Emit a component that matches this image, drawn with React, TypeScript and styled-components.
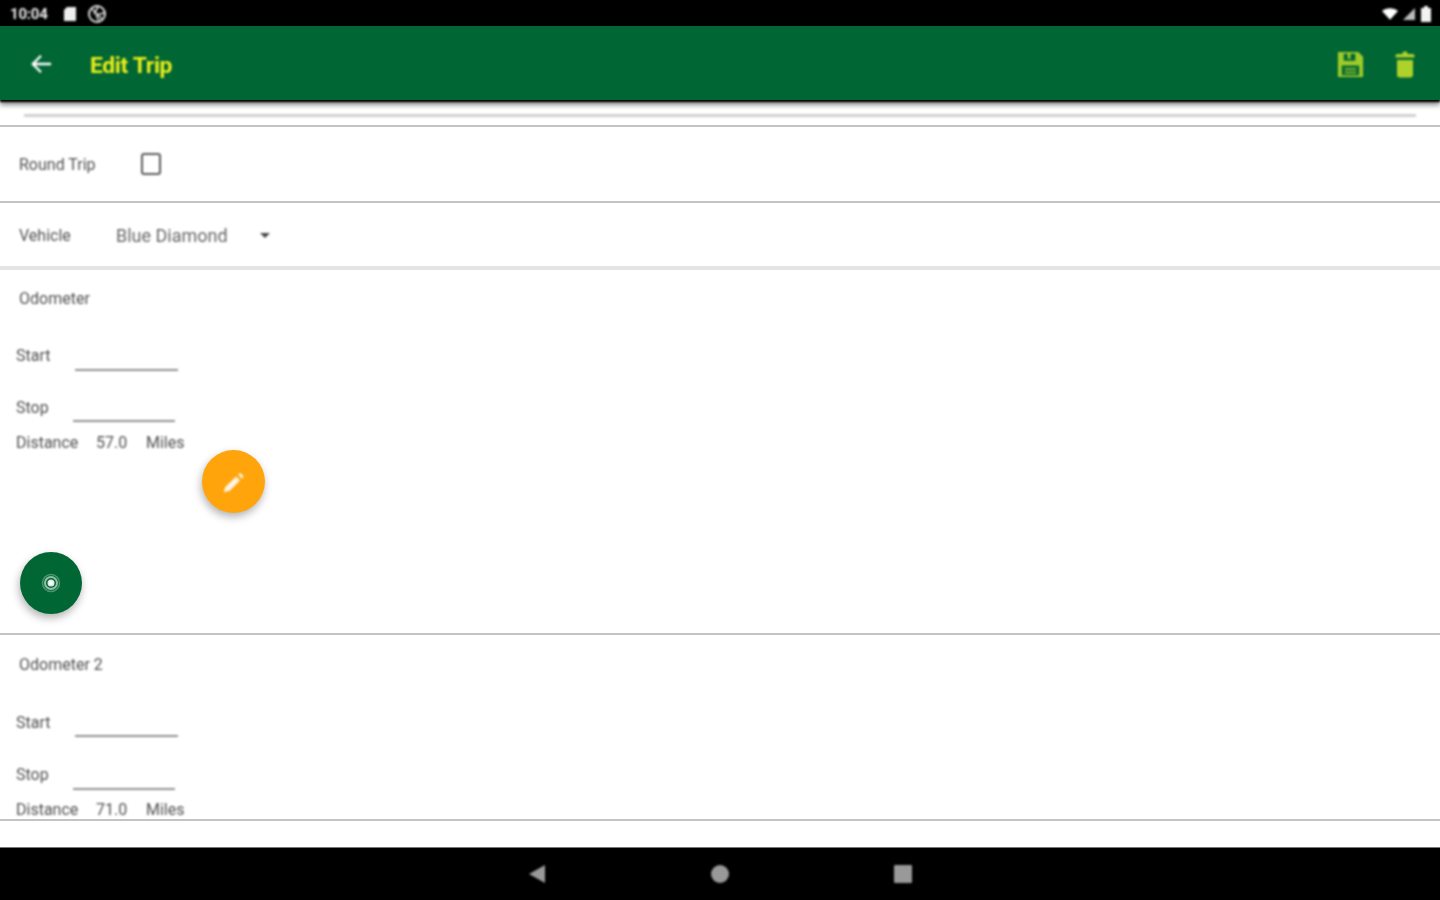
import React from "react";
import styled, { createGlobalStyle, css } from "styled-components";

const Global = createGlobalStyle`
  html, body { margin: 0; padding: 0; background: #fff; }
  #root { width: 1440px; height: 900px; overflow: hidden; }
`;

const soft = css`
  filter: blur(0.8px);
`;

const Screen = styled.div`
  position: relative;
  width: 1440px;
  height: 900px;
  display: flex;
  flex-direction: column;
  font-family: Roboto, "Liberation Sans", sans-serif;
  background: #fff;
  overflow: hidden;
`;

const StatusBar = styled.div`
  height: 26px;
  flex: none;
  background: #000;
  display: flex;
  align-items: center;
  padding: 2px 8px 0 10px;
  box-sizing: border-box;
  color: #e8e8e8;
  svg {
    ${soft}
  }
`;
const Clock = styled.span`
  ${soft}
  font-size: 15px;
  font-weight: 700;
  letter-spacing: -0.2px;
  width: 53px;
`;
const StatusLeft = styled.div`
  display: flex;
  align-items: center;
  gap: 10px;
`;
const Spacer = styled.div`
  flex: 1;
`;
const StatusRight = styled.div`
  display: flex;
  align-items: center;
  gap: 4px;
`;

const Toolbar = styled.header`
  position: relative;
  z-index: 1;
  height: 74px;
  flex: none;
  background: #006633;
  display: flex;
  align-items: center;
  padding: 2px 25px 0 30px;
  box-sizing: border-box;
  box-shadow: 0 2px 2px #000, 0 5px 5px rgba(0, 0, 0, 0.45);
  svg {
    ${soft}
  }
`;
const Title = styled.h1`
  ${soft}
  margin: 2px 0 0 38px;
  font-size: 22.8px;
  font-weight: 700;
  letter-spacing: -0.3px;
  color: #eef01a;
  flex: 1;
`;
const Actions = styled.div`
  display: flex;
  align-items: center;
  gap: 30px;
`;

const TopRule = styled.div`
  ${soft}
  height: 3px;
  margin: 14px 24px 8px;
  background: #d0d0d0;
`;

const Divider = styled.div<{ $h?: number; $c?: string }>`
  height: ${(p) => p.$h ?? 2}px;
  flex: none;
  background: ${(p) => p.$c ?? "#c4c4c4"};
`;

const Row = styled.div<{ $h: number; $pt?: number }>`
  height: ${(p) => p.$h}px;
  flex: none;
  display: flex;
  align-items: center;
  box-sizing: border-box;
  padding: ${(p) => p.$pt ?? 0}px 0 0 19px;
`;

const Label = styled.span`
  ${soft}
  font-size: 16px;
  color: #505050;
`;
const RowLabel = styled(Label)<{ $w: number }>`
  width: ${(p) => p.$w}px;
  flex: none;
`;
const Checkbox = styled.span`
  ${soft}
  width: 16px;
  height: 18px;
  border: 2px solid #5a5a5a;
  border-radius: 3px;
`;
const SelectValue = styled.span`
  ${soft}
  font-size: 18px;
  color: #666;
  width: 144px;
`;
const Caret = styled.span`
  ${soft}
  width: 0;
  height: 0;
  border-left: 5px solid transparent;
  border-right: 5px solid transparent;
  border-top: 5px solid #444;
`;

const Section = styled.section<{ $h: number }>`
  height: ${(p) => p.$h}px;
  flex: none;
  display: flex;
  flex-direction: column;
  overflow: hidden;
`;
const SectionTitle = styled(Label)<{ $top: number }>`
  margin: ${(p) => p.$top}px 0 0 19px;
  line-height: 18px;
`;
const Field = styled.div<{ $top: number; $left: number; $h: number }>`
  margin-top: ${(p) => p.$top}px;
  padding-left: 16px;
  height: ${(p) => p.$h}px;
  display: flex;
  align-items: flex-start;
  & > span:first-child {
    width: ${(p) => p.$left}px;
    flex: none;
    line-height: 18px;
  }
`;
const Underline = styled.i<{ $w: number }>`
  ${soft}
  display: block;
  width: ${(p) => p.$w}px;
  height: 100%;
  box-sizing: border-box;
  border-bottom: 2px solid #909090;
`;
const DistanceRow = styled.div<{ $top: number }>`
  margin-top: ${(p) => p.$top}px;
  padding-left: 16px;
  display: flex;
  line-height: 18px;
`;
const DistName = styled(Label)`
  width: 80px;
`;
const DistValue = styled(Label)`
  width: 50px;
`;

const NavBar = styled.nav`
  margin-top: auto;
  height: 53px;
  flex: none;
  background: #000;
  border-top: 1px solid #777;
  box-sizing: border-box;
  display: flex;
  align-items: center;
  justify-content: center;
  gap: 165px;
  svg {
    ${soft}
  }
`;

const Fab = styled.button<{ $x: number; $y: number; $s: number; $c: string }>`
  position: absolute;
  left: ${(p) => p.$x}px;
  top: ${(p) => p.$y}px;
  width: ${(p) => p.$s}px;
  height: ${(p) => p.$s}px;
  border: 0;
  padding: 0;
  border-radius: 50%;
  background: ${(p) => p.$c};
  display: flex;
  align-items: center;
  justify-content: center;
  box-shadow: -1px 4px 8px rgba(0, 0, 0, 0.3);
`;
const PencilIcon = styled.svg`
  ${soft}
`;

type OdoProps = {
  title: string;
  dist: string;
  h: number;
  titleTop: number;
  startTop: number;
  startH: number;
  stopTop: number;
  stopH: number;
  distTop: number;
};

const Odometer = ({ title, dist, h, titleTop, startTop, startH, stopTop, stopH, distTop }: OdoProps) => (
  <Section $h={h}>
    <SectionTitle $top={titleTop}>{title}</SectionTitle>
    <Field $top={startTop} $left={59} $h={startH}>
      <Label>Start</Label>
      <Underline $w={103} />
    </Field>
    <Field $top={stopTop} $left={57} $h={stopH}>
      <Label>Stop</Label>
      <Underline $w={102} />
    </Field>
    <DistanceRow $top={distTop}>
      <DistName>Distance</DistName>
      <DistValue>{dist}</DistValue>
      <Label>Miles</Label>
    </DistanceRow>
  </Section>
);

export default function App() {
  return (
    <>
      <Global />
      <Screen>
        <StatusBar>
          <Clock>10:04</Clock>
          <StatusLeft>
            <svg width="14" height="16" viewBox="0 0 14 16">
              <path d="M4 1h9v14H1V4z" fill="#eee" />
            </svg>
            <svg width="20" height="20" viewBox="0 0 20 20" fill="none" stroke="#ddd" strokeWidth="2">
              <circle cx="10" cy="10" r="8" />
              <path d="M5 5l10 10M11 3l-4 7M17 9l-8 2M12 17l-3-6" strokeWidth="1.6" />
            </svg>
          </StatusLeft>
          <Spacer />
          <StatusRight>
            <svg width="16" height="12" viewBox="0 0 18 13">
              <path d="M0 3C5-1 13-1 18 3l-9 10z" fill="#fff" />
            </svg>
            <svg width="14" height="14" viewBox="0 0 14 14">
              <path d="M13 1v12H1z" fill="#bbb" />
            </svg>
            <svg width="12" height="16" viewBox="0 0 12 16">
              <path d="M4 0h4v2h3v14H1V2h3z" fill="#f2f2f2" />
            </svg>
          </StatusRight>
        </StatusBar>

        <Toolbar>
          <svg width="22" height="22" viewBox="0 0 24 24" fill="none" stroke="#fff" strokeWidth="2.6">
            <path d="M23 12H3M12 3l-9 9 9 9" />
          </svg>
          <Title>Edit Trip</Title>
          <Actions>
            <svg width="29" height="29" viewBox="0 0 30 30">
              <path
                fillRule="evenodd"
                d="M2 2h21l5 5v21H2zM8 4v7h12V4h-5v5h-3V4zM6 16v10h18V16z"
                fill="#a0cc2a"
              />
              <path d="M9 19h12v1.5H9zM9 22.5h12V24H9z" fill="#a0cc2a" />
            </svg>
            <svg width="20" height="28" viewBox="0 0 20 28">
              <path
                d="M7.5 2.5C8 1 12 1 12.5 2.5V4H18c1 0 1.5 1 1.5 2.5v1H.5v-1C.5 5 1 4 2 4h5.5zM2 10h16v15c0 1.5-1 2.5-2.5 2.5h-11C3 27.5 2 26.5 2 25z"
                fill="#add22a"
              />
            </svg>
          </Actions>
        </Toolbar>

        <TopRule />
        <Divider />
        <Row $h={74}>
          <RowLabel $w={122}>Round Trip</RowLabel>
          <Checkbox />
        </Row>
        <Divider />
        <Row $h={63} $pt={1}>
          <RowLabel $w={97}>Vehicle</RowLabel>
          <SelectValue>Blue Diamond</SelectValue>
          <Caret />
        </Row>
        <Divider $h={4} $c="#e4e4e4" />
        <Odometer
          title="Odometer"
          dist="57.0"
          h={363}
          titleTop={20}
          startTop={39}
          startH={24}
          stopTop={28}
          stopH={23}
          distTop={12}
        />
        <Divider />
        <Odometer
          title="Odometer 2"
          dist="71.0"
          h={184}
          titleTop={21}
          startTop={40}
          startH={23}
          stopTop={29}
          stopH={24}
          distTop={11}
        />
        <Divider />

        <NavBar>
          <svg width="18" height="20" viewBox="0 0 18 20">
            <path d="M17 1v18L1 10z" fill="#999" />
          </svg>
          <svg width="18" height="18" viewBox="0 0 18 18">
            <circle cx="9" cy="9" r="9" fill="#999" />
          </svg>
          <svg width="18" height="18" viewBox="0 0 18 18">
            <rect width="18" height="18" rx="1" fill="#999" />
          </svg>
        </NavBar>

        <Fab $x={202} $y={450} $s={63} $c="#ffa40a">
          <PencilIcon width="26" height="26" viewBox="0 0 24 24">
            <path d="M2.5 21.5l1.5-5L14 7l3.5 3.5-9.5 9.5zM16 5l1.5-1.5 3.5 3.5L19 9z" fill="#fff" opacity="0.9" />
          </PencilIcon>
        </Fab>
        <Fab $x={20} $y={552} $s={62} $c="#006633">
          <svg width="20" height="20" viewBox="0 0 20 20" fill="none">
            <circle cx="10" cy="10" r="8.5" stroke="#4f9372" strokeWidth="1.5" />
            <circle cx="10" cy="10" r="6" stroke="#8fc0a6" strokeWidth="2" />
            <circle cx="10" cy="10" r="3.5" fill="#d7ebe0" />
            <circle cx="10" cy="10" r="2" fill="#fff" />
          </svg>
        </Fab>
      </Screen>
    </>
  );
}
